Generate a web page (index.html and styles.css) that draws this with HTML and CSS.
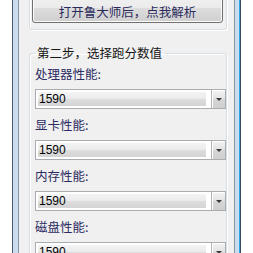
FILE: index.html
```html
<!DOCTYPE html>
<html lang="zh-CN">
<head>
  <meta charset="UTF-8" />
  <meta name="viewport" content="width=device-width, initial-scale=1.0" />
  <title>跑分解析</title>
  <link rel="stylesheet" href="styles.css">
</head>
<body>
  <div class="window">
    <div class="client">
      <div class="group step1">
        <button class="parse-btn">打开鲁大师后，点我解析</button>
      </div>

      <fieldset class="group step2">
        <legend>第二步，选择跑分数值</legend>

        <div class="label">处理器性能:</div>
        <div class="combo"><span class="val">1590</span><span class="arrow"></span></div>

        <div class="label">显卡性能:</div>
        <div class="combo"><span class="val">1590</span><span class="arrow"></span></div>

        <div class="label">内存性能:</div>
        <div class="combo"><span class="val">1590</span><span class="arrow"></span></div>

        <div class="label">磁盘性能:</div>
        <div class="combo"><span class="val">1590</span><span class="arrow"></span></div>
      </fieldset>
    </div>
  </div>
</body>
</html>
```

FILE: styles.css
```css
html, body {
  margin: 0;
  background-color: #ffffff;
  font-family: "Noto Sans CJK SC", "Noto Sans", sans-serif;
  font-size: 12.5px;
  overflow: hidden;
}
.window {
  margin-left: 12px;
  width: 229px;
  height: 253px;
  box-sizing: border-box;
  border-left: 1px solid #4e5d6c;
  border-right: 1px solid #37495a;
  padding: 0 5px;
  background-color: #cadcee;
  box-shadow: inset -1px 0 0 #2aa6e4;
}
.client {
  height: 100%;
  border-left: 1px solid #8596a8;
  border-right: 1px solid #8596a8;
  background-color: #f0f0f0;
  overflow: hidden;
}
.group {
  margin: 0 7px 0 10px;
  border: 1px solid #d5dfe5;
  border-radius: 3px;
  box-shadow: 1px 1px 0 #ffffff, inset 1px 1px 0 #ffffff;
}
.step1 {
  margin-top: -19px;
  padding: 10px 3px 6px 2px;
}
/* top of the button lies above the visible area, text sits in its lower part */
.parse-btn {
  display: block;
  width: 100%;
  height: 31px;
  padding: 9px 0 0;
  border: 1px solid #707070;
  border-radius: 3px;
  background: linear-gradient(#f2f2f2 0%, #ebebeb 50%, #dddddd 51%, #cfcfcf 100%);
  box-shadow: inset 0 0 0 1px #fbfbfb;
  color: #2a2a5c;
  font-family: inherit;
  font-size: 12.5px;
  line-height: 14px;
}
.step2 {
  margin-top: 15px;
  padding: 4px 0 0 5px;
  min-width: 0;
}
.step2 legend {
  padding: 0 2px;
  line-height: 16px;
  color: #151515;
}
.label {
  line-height: 18px;
  margin: 7px 0 6px;
  color: #2b2b62;
}
.step2 legend + .label { margin-top: 0; }
.combo {
  display: flex;
  height: 20px;
  box-sizing: border-box;
  border: 1px solid #a9acb1;
  background-color: #ffffff;
  padding-left: 2px;
}
.val {
  flex: 1;
  margin: 2px 5px 2px 0;
  padding-left: 1px;
  background: linear-gradient(#f3f3f3 0%, #ececec 45%, #dcdcdc 55%, #d4d4d4 100%);
  font-family: "Liberation Sans", Arial, sans-serif;
  font-size: 12px;
  line-height: 14px;
  color: #000000;
}
.arrow {
  position: relative;
  width: 13px;
  border-left: 1px solid #b4b4b4;
  background: linear-gradient(#f4f4f4, #e2e2e2 50%, #d6d6d6 51%, #cfcfcf);
  box-shadow: inset 1px 1px 0 #ffffff;
}
.arrow::after {
  content: "";
  position: absolute;
  left: 4px;
  top: 8px;
  border-left: 3px solid transparent;
  border-right: 3px solid transparent;
  border-top: 3px solid #3a3a3a;
}
```
